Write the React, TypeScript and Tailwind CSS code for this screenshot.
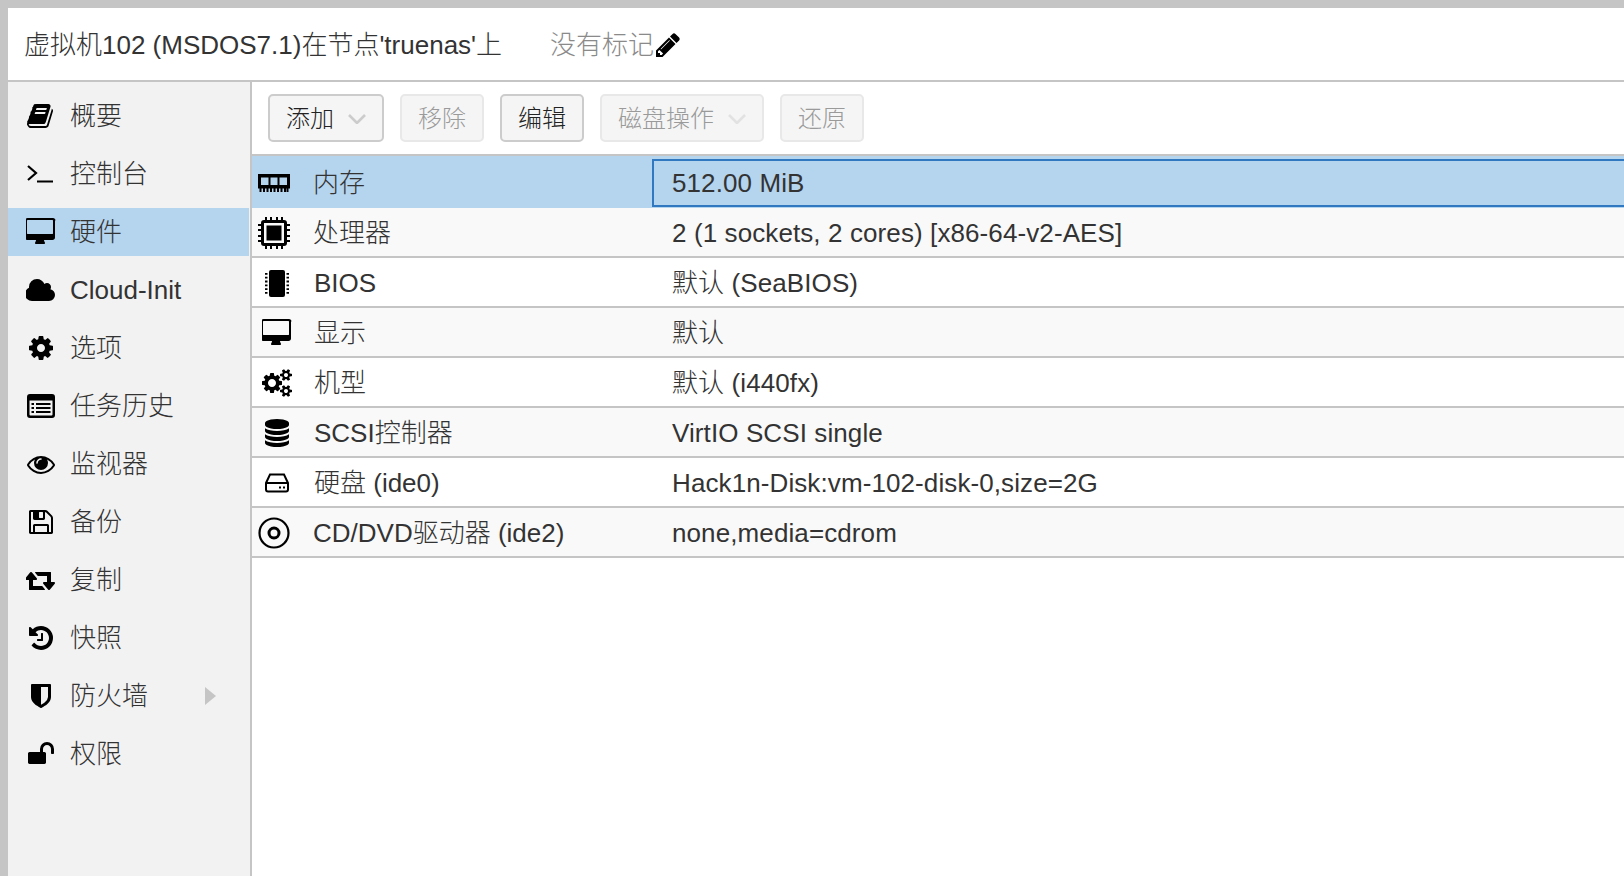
import React from 'react';

const FONT = "font-['Liberation_Sans','Noto_Sans_CJK_SC',sans-serif]";

// Font Awesome 4 shapes, the set the screenshot uses
const paths = {
  book: 'M1639 478q40 57 18 129l-275 906q-19 64-76.500 107.500t-122.500 43.500h-923q-77 0-148.500-53.500t-99.500-131.500q-24-67-2-127 0-4 3-27t4-37q1-8-3-21.500t-3-19.500q2-11 8-21t16.500-23.500 16.500-23.500q23-38 45-91.500t30-91.500q3-10 .5-30t-.5-28q3-11 17-28t17-23q21-36 42-92t25-90q1-9-2.500-32t.5-28q4-13 22-30.500t22-22.500q19-26 42.500-84.500t27.500-96.500q1-8-3-25.500t-2-26.500q2-8 9-18t18-23 17-21q8-12 16.500-30.500t15-35 16-36 19.500-32 26.500-23.500 36-11.500 47.500 5.500l-1 3q38-9 51-9h761q74 0 114 56t18 130l-274 906q-36 119-71.500 153.500t-128.500 34.500h-869q-27 0-38 15-11 16-1 43 24 70 144 70h923q29 0 56-15.500t35-41.500l300-987q7-22 5-57 38 15 59 43zm-1064 2q-4 13 2 22.500t20 9.500h608q13 0 25.500-9.500t16.500-22.500l21-64q4-13-2-22.500t-20-9.500h-608q-13 0-25.500 9.500t-16.500 22.500zm-83 256q-4 13 2 22.500t20 9.500h608q13 0 25.500-9.500t16.500-22.500l21-64q4-13-2-22.500t-20-9.500h-608q-13 0-25.500 9.500t-16.500 22.500z',
  desktop: 'M1728 992v-832q0-13-9.500-22.500t-22.500-9.500h-1600q-13 0-22.500 9.500t-9.500 22.500v832q0 13 9.500 22.500t22.500 9.500h1600q13 0 22.500-9.500t9.500-22.500zm128-832v1088q0 66-47 113t-113 47h-544q0 37 16 77.500t32 71 16 43.500q0 26-19 45t-45 19h-512q-26 0-45-19t-19-45q0-14 16-44t32-70 16-78h-544q-66 0-113-47t-47-113v-1088q0-66 47-113t113-47h1632q66 0 113 47t47 113z',
  cloud: 'M1856 1216q0 159-112.500 271.500t-271.500 112.500h-1088q-185 0-316.500-131.500t-131.500-316.500q0-132 71-241.500t187-163.500q-2-28-2-43 0-212 150-362t362-150q158 0 286.500 88t187.500 230q70-62 166-62 106 0 181 75t75 181q0 75-41 138 129 30 213 134.500t84 239.500z',
  cog: 'M1152 896q0-106-75-181t-181-75-181 75-75 181 75 181 181 75 181-75 75-181zm512-109v222q0 12-8 23t-20 13l-185 28q-19 54-39 91 35 50 107 138 10 12 10 25t-9 23q-27 37-99 108t-94 71q-12 0-26-9l-138-108q-44 23-91 38-16 136-29 186-7 28-36 28h-222q-14 0-24.500-8.500t-11.500-21.500l-28-184q-49-16-90-37l-141 107q-10 9-25 9-14 0-25-11-126-114-165-168-7-10-7-23 0-12 8-23 15-21 51-66.500t54-70.500q-27-50-41-99l-183-27q-13-2-21-12.500t-8-23.500v-222q0-12 8-23t19-13l186-28q14-46 39-92-40-57-107-138-10-12-10-24 0-10 9-23 26-36 98.500-107.500t94.500-71.500q13 0 26 10l138 107q44-23 91-38 16-136 29-186 7-28 36-28h222q14 0 24.500 8.500t11.500 21.500l28 184q49 16 90 37l142-107q9-9 24-9 13 0 25 10 129 119 165 170 7 8 7 22 0 12-8 23-15 21-51 66.500t-54 70.500q26 50 41 98l183 28q13 2 21 12.500t8 23.500z',
  cogs: 'M896 896q0-106-75-181t-181-75-181 75-75 181 75 181 181 75 181-75 75-181zm768 512q0-52-38-90t-90-38-90 38-38 90q0 53 37.500 90.500t90.500 37.500 90.500-37.500 37.500-90.500zm0-1024q0-52-38-90t-90-38-90 38-38 90q0 53 37.500 90.500t90.500 37.500 90.500-37.500 37.500-90.500zm-384 421v185q0 10-7 19.500t-16 10.500l-155 24q-11 35-32 76 34 48 90 115 7 11 7 20 0 12-7 19-23 30-82.500 89.500t-78.500 59.500q-11 0-21-7l-115-90q-37 19-77 31-11 108-23 155-7 24-30 24h-186q-11 0-20-7.500t-10-17.500l-23-153q-34-10-75-31l-118 89q-7 7-20 7-11 0-21-8-144-133-144-160 0-9 7-19 10-14 41-53t47-61q-23-44-35-82l-152-24q-10-1-17-9.500t-7-19.500v-185q0-10 7-19.500t16-10.500l155-24q11-35 32-76-34-48-90-115-7-11-7-20 0-12 7-20 22-30 82-89t79-59q11 0 21 7l115 90q34-18 77-32 11-108 23-154 7-24 30-24h186q11 0 20 7.500t10 17.500l23 153q34 10 75 31l118-89q8-7 20-7 11 0 21 8 144 133 144 160 0 8-7 19-12 16-42 54t-45 60q23 48 34 82l152 23q10 2 17 10.500t7 19.500zm640 533v140q0 16-149 31-12 27-30 52 51 113 51 138 0 4-4 7-122 71-124 71-8 0-46-47t-52-68q-20 2-30 2t-30-2q-14 21-52 68t-46 47q-2 0-124-71-4-3-4-7 0-25 51-138-18-25-30-52-149-15-149-31v-140q0-16 149-31 13-29 30-52-51-113-51-138 0-4 4-7 4-2 35-20t59-34 30-16q8 0 46 46.500t52 67.500q20-2 30-2t30 2q51-71 92-112l6-2q4 0 124 70 4 3 4 7 0 25-51 138 17 23 30 52 149 15 149 31zm0-1024v140q0 16-149 31-12 27-30 52 51 113 51 138 0 4-4 7-122 71-124 71-8 0-46-47t-52-68q-20 2-30 2t-30-2q-14 21-52 68t-46 47q-2 0-124-71-4-3-4-7 0-25 51-138-18-25-30-52-149-15-149-31v-140q0-16 149-31 13-29 30-52-51-113-51-138 0-4 4-7 4-2 35-20t59-34 30-16q8 0 46 46.500t52 67.500q20-2 30-2t30 2q51-71 92-112l6-2q4 0 124 70 4 3 4 7 0 25-51 138 17 23 30 52 149 15 149 31z',
  eye: 'M1664 960q-152-236-381-353 61 104 61 225 0 185-131.500 316.500t-316.500 131.500-316.500-131.500-131.500-316.500q0-121 61-225-229 117-381 353 133 205 333.500 326.500t434.500 121.500 434.500-121.500 333.500-326.500zm-720-384q0-20-14-34t-34-14q-125 0-214.500 89.500t-89.500 214.500q0 20 14 34t34 14 34-14 14-34q0-86 61-147t147-61q20 0 34-14t14-34zm848 384q0 34-20 69-140 230-376.500 368.500t-499.500 138.500-499.500-139-376.500-368q-20-35-20-69t20-69q140-229 376.500-368t499.500-139 499.500 139 376.500 368q20 35 20 69z',
  floppy: 'M512 1536h768v-384h-768v384zm896 0h128v-896q0-14-10-38.500t-20-34.500l-281-281q-10-10-34-20t-39-10v416q0 40-28 68t-68 28h-576q-40 0-68-28t-28-68v-416h-128v1280h128v-416q0-40 28-68t68-28h832q40 0 68 28t28 68v416zm-384-928v-320q0-13-9.500-22.500t-22.500-9.500h-192q-13 0-22.500 9.500t-9.500 22.500v320q0 13 9.500 22.500t22.500 9.500h192q13 0 22.500-9.500t9.500-22.500zm640 32v928q0 40-28 68t-68 28h-1344q-40 0-68-28t-28-68v-1344q0-40 28-68t68-28h928q40 0 88 20t76 48l280 280q28 28 48 76t20 88z',
  retweet: 'M1216 1504q0 13-9.500 22.500t-22.500 9.500h-960q-8 0-13.500-2t-9-7-5.500-8-3-11.500-1-11.500v-600h-192q-26 0-45-19t-19-45q0-24 15-41l320-384q19-22 49-22t49 22l320 384q15 17 15 41 0 26-19 45t-45 19h-192v384h576q16 0 25 11l160 192q7 10 7 21zm640-416q0 24-15 41l-320 384q-20 23-49 23t-49-23l-320-384q-15-17-15-41 0-26 19-45t45-19h192v-384h-576q-16 0-25-12l-160-192q-7-9-7-20 0-13 9.500-22.500t22.500-9.500h960q8 0 13.500 2t9 7 5.500 8 3 11.500 1 11.500v600h192q26 0 45 19t19 45z',
  history: 'M1664 896q0 156-61 298t-164 245-245 164-298 61q-172 0-327-72.500t-264-204.500q-7-10-6.500-22.500t8.500-20.500l137-138q10-9 25-9 16 2 23 12 73 95 179 147t225 52q104 0 198.500-40.500t163.500-109.500 109.500-163.500 40.500-198.500-40.500-198.500-109.500-163.500-163.500-109.500-198.500-40.500q-98 0-188 35.500t-160 101.500l137 138q31 30 14 69-17 40-59 40h-448q-26 0-45-19t-19-45v-448q0-42 40-59 39-17 69 14l130 129q107-101 244.500-156.500t284.500-55.500q156 0 298 61t245 164 164 245 61 298zm-640-288v448q0 14-9 23t-23 9h-320q-14 0-23-9t-9-23v-64q0-14 9-23t23-9h224v-352q0-14 9-23t23-9h64q14 0 23 9t9 23z',
  shield: 'M1344 960v-640h-448v1137q119-63 213-137 235-184 235-360zm192-768v768q0 86-33.500 170.500t-83 150-118 127.500-126.500 103-121 77.500-89.500 49.500-42.500 20q-12 6-26 6t-26-6q-16-7-42.500-20t-89.500-49.500-121-77.500-126.500-103-118-127.500-83-150-33.500-170.500v-768q0-26 19-45t45-19h1152q26 0 45 19t19 45z',
  unlock: 'M1728 576v256q0 26-19 45t-45 19h-64q-26 0-45-19t-19-45v-256q0-106-75-181t-181-75-181 75-75 181v192h96q40 0 68 28t28 68v576q0 40-28 68t-68 28h-960q-40 0-68-28t-28-68v-576q0-40 28-68t68-28h672v-192q0-185 131.500-316.500t316.500-131.500 316.500 131.500 131.500 316.500z',
  database: 'M896 768q237 0 443-43t325-127v170q0 69-103 128t-280 93.500-385 34.500-385-34.500-280-93.500-103-128v-170q119 84 325 127t443 43zm0 768q237 0 443-43t325-127v170q0 69-103 128t-280 93.500-385 34.500-385-34.500-280-93.500-103-128v-170q119 84 325 127t443 43zm0-384q237 0 443-43t325-127v170q0 69-103 128t-280 93.500-385 34.500-385-34.500-280-93.500-103-128v-170q119 84 325 127t443 43zm0-1152q208 0 385 34.500t280 93.500 103 128v128q0 69-103 128t-280 93.500-385 34.500-385-34.500-280-93.500-103-128v-128q0-69 103-128t280-93.500 385-34.500z',
  pencil: 'M491 1536l91-91-235-235-91 91v107h128v128h107zm523-928q0-22-22-22-10 0-17 7l-542 542q-7 7-7 17 0 22 22 22 10 0 17-7l542-542q7-7 7-17zm-54-192l416 416-832 832h-416v-416zm683 96q0 53-37 90l-166 166-416-416 166-165q36-38 90-38 53 0 91 38l235 234q37 39 37 91z',
};

const Fa = ({ d, wide }: { d: string; wide?: boolean }) => (
  <svg width={wide ? 30 : 28} height="28" viewBox={wide ? '0 0 1920 1792' : '0 0 1792 1792'} fill="currentColor">
    <path d={d} />
  </svg>
);

const TerminalIcon = () => (
  <svg width="28" height="20" viewBox="0 0 28 20" fill="none" stroke="currentColor">
    <path d="M1 2l8 7-8 7" strokeWidth="2.200" />
    <path d="M10 17.500h16" strokeWidth="2" />
  </svg>
);

const ListIcon = () => (
  <svg width="28" height="24" viewBox="0 0 28 24" fill="currentColor">
    <path d="M3 0h22a3 3 0 013 3v18a3 3 0 01-3 3H3a3 3 0 01-3-3V3a3 3 0 013-3zM2.500 6.500v14a1 1 0 001 1h21a1 1 0 001-1v-14z" fillRule="evenodd" />
    <path d="M4.500 9h2.500v2H4.500zM4.500 13h2.500v2H4.500zM4.500 17h2.500v2H4.500zM9 9h14.500v2H9zM9 13h14.500v2H9zM9 17h14.500v2H9z" />
  </svg>
);

const MemoryIcon = () => (
  <svg width="32" height="18" viewBox="0 0 32 18" fill="currentColor">
    <path d="M0 0h32v14.500H0zM3 3.500v7.500h7.500V3.500zM12.500 3.500v7.500h7V3.500zM21.500 3.500v7.500h7.500V3.500z" fillRule="evenodd" />
    <path d="M1.500 14h2v4h-2zM5 14h2v4H5zM8.500 14h2v4h-2zM12 14h2v4h-2zM15.500 14h2v4h-2zM19 14h2v4h-2zM22.500 14h2v4h-2zM26 14h2v4h-2zM28.500 14h2v4h-2z" />
  </svg>
);

const CpuIcon = () => (
  <svg width="32" height="32" viewBox="0 0 32 32" fill="currentColor">
    <path d="M6 3h20a3 3 0 013 3v20a3 3 0 01-3 3H6a3 3 0 01-3-3V6a3 3 0 013-3zM6 6v20h20V6z" fillRule="evenodd" />
    <rect x="8.500" y="8.500" width="15" height="15" />
    <path d="M7 0h2v4H7zM12 0h2v4h-2zM18 0h2v4h-2zM23 0h2v4h-2zM7 28h2v4H7zM12 28h2v4h-2zM18 28h2v4h-2zM23 28h2v4h-2zM0 7h4v2H0zM0 12h4v2H0zM0 18h4v2H0zM0 23h4v2H0zM28 7h4v2h-4zM28 12h4v2h-4zM28 18h4v2h-4zM28 23h4v2h-4z" />
  </svg>
);

const BiosIcon = () => (
  <svg width="24" height="27" viewBox="0 0 24 27" fill="currentColor">
    <rect x="4" y="0" width="16" height="27" rx="2" />
    <path d="M0 3h2.500v1.800H0zM0 6.800h2.500v1.800H0zM0 10.600h2.500v1.800H0zM0 14.400h2.500v1.800H0zM0 18.200h2.500v1.800H0zM0 22h2.500v1.800H0zM21.500 3H24v1.800h-2.500zM21.500 6.800H24v1.800h-2.500zM21.500 10.600H24v1.800h-2.500zM21.500 14.400H24v1.800h-2.500zM21.500 18.200H24v1.800h-2.500zM21.500 22H24v1.800h-2.500z" />
  </svg>
);

const HddIcon = () => (
  <svg width="24" height="20" viewBox="0 0 24 20" fill="none" stroke="currentColor" strokeWidth="2">
    <path d="M1 10L5 1.500h14L23 10v6.500a2 2 0 01-2 2H3a2 2 0 01-2-2zM1 10h22" />
    <path d="M14 14.500h2M18 14.500h2" />
  </svg>
);

const CdIcon = () => (
  <svg width="32" height="32" viewBox="0 0 32 32" fill="none" stroke="currentColor">
    <circle cx="16" cy="16" r="14.500" strokeWidth="2.200" />
    <circle cx="16" cy="16" r="5" strokeWidth="3" />
  </svg>
);

const navItems = [
  { label: '概要', icon: <Fa d={paths.book} /> },
  { label: '控制台', icon: <TerminalIcon /> },
  { label: '硬件', icon: <Fa d={paths.desktop} wide />, active: true },
  { label: 'Cloud-Init', icon: <Fa d={paths.cloud} wide /> },
  { label: '选项', icon: <Fa d={paths.cog} /> },
  { label: '任务历史', icon: <ListIcon /> },
  { label: '监视器', icon: <Fa d={paths.eye} /> },
  { label: '备份', icon: <Fa d={paths.floppy} /> },
  { label: '复制', icon: <Fa d={paths.retweet} wide /> },
  { label: '快照', icon: <Fa d={paths.history} /> },
  { label: '防火墙', icon: <Fa d={paths.shield} />, arrow: true },
  { label: '权限', icon: <Fa d={paths.unlock} /> },
];

const rows = [
  { name: '内存', value: '512.00 MiB', icon: <MemoryIcon />, selected: true },
  { name: '处理器', value: '2 (1 sockets, 2 cores) [x86-64-v2-AES]', icon: <CpuIcon /> },
  { name: 'BIOS', value: '默认 (SeaBIOS)', icon: <BiosIcon />, shifted: true },
  { name: '显示', value: '默认', icon: <Fa d={paths.desktop} wide />, shifted: true },
  { name: '机型', value: '默认 (i440fx)', icon: <Fa d={paths.cogs} wide />, shifted: true },
  { name: 'SCSI控制器', value: 'VirtIO SCSI single', icon: <Fa d={paths.database} />, shifted: true },
  { name: '硬盘 (ide0)', value: 'Hack1n-Disk:vm-102-disk-0,size=2G', icon: <HddIcon />, shifted: true },
  { name: 'CD/DVD驱动器 (ide2)', value: 'none,media=cdrom', icon: <CdIcon /> },
];

const ToolButton = ({ label, width, disabled, menu }: { label: string; width: string; disabled?: boolean; menu?: boolean }) => (
  <button
    className={`${width} flex h-[48px] items-center justify-center rounded-[5px] border-2 bg-[#f5f5f5] pt-[2px] text-[24px] ${
      disabled ? 'border-[#e8e8e8] text-[#9a9a9a]' : 'border-[#cccccc] text-[#222]'
    }`}
  >
    {label}
    {menu && (
      <svg width="18" height="10" viewBox="0 0 18 10" fill="none" stroke={disabled ? '#e2e2e2' : '#cccccc'} strokeWidth="2.600" className="ml-[14px]">
        <path d="M1 1l8 8 8-8" />
      </svg>
    )}
  </button>
);

const App = () => {
  return (
    <div className={`h-[876px] w-[1624px] overflow-hidden bg-[#c5c5c5] pt-2 pl-2 text-[26px] font-light text-[#333] ${FONT}`}>
      <div className="flex h-[868px] flex-col bg-white">
        <div className="flex h-[74px] shrink-0 items-center border-b-2 border-[#c5c5c5] pl-4 pt-[2px]">
          <span className="w-[526px]">虚拟机102 (MSDOS7.1)在节点'truenas'上</span>
          <span className="text-[#8a8a8a]">没有标记</span>
          <span className="text-black">
            <Fa d={paths.pencil} />
          </span>
        </div>

        <div className="flex min-h-0 flex-1">
          <div className="flex w-[244px] shrink-0 flex-col gap-[10px] border-r-2 border-[#c5c5c5] bg-[#f2f2f2] pt-[10px]">
            {navItems.map((item) => (
              <div key={item.label} className={`flex h-[48px] items-center ${item.active ? 'mr-[1px] bg-[#b5d4ee]' : ''}`}>
                <span className="flex w-[62px] justify-center pl-[3px] text-black">{item.icon}</span>
                <span>{item.label}</span>
                {item.arrow && <span className="ml-[57px] h-0 w-0 border-y-[9px] border-l-[11px] border-y-transparent border-l-[#c5c5c5]" />}
              </div>
            ))}
          </div>

          <div className="min-w-0 flex-1">
            <div className="flex h-[72px] items-center gap-4 pl-4">
              <ToolButton label="添加" width="w-[116px]" menu />
              <ToolButton label="移除" width="w-[84px]" disabled />
              <ToolButton label="编辑" width="w-[84px]" />
              <ToolButton label="磁盘操作" width="w-[164px]" disabled menu />
              <ToolButton label="还原" width="w-[84px]" disabled />
            </div>

            <div className="border-t-2 border-[#c5c5c5]">
              {rows.map((row, index) => (
                <div
                  key={row.name}
                  className={`flex items-center pt-[2px] ${
                    row.selected
                      ? 'h-[52px] bg-[#b5d4ee]'
                      : `h-[50px] border-b-2 border-[#c5c5c5] ${index % 2 === 1 ? 'bg-[#f9f9f9]' : 'bg-white'}`
                  }`}
                >
                  <span className={`flex w-[44px] shrink-0 justify-center text-black ${row.shifted ? 'pl-[6px]' : ''}`}>{row.icon}</span>
                  <span className={`w-[356px] shrink-0 ${row.shifted ? 'pl-[18px]' : 'pl-[17px]'}`}>{row.name}</span>
                  {row.selected ? (
                    <span className="flex h-[48px] flex-1 items-center border-y-2 border-l-2 border-[#3079c0] pl-[18px] tracking-[0.1px]">{row.value}</span>
                  ) : (
                    <span className="pl-[20px] tracking-[0.1px]">{row.value}</span>
                  )}
                </div>
              ))}
            </div>
          </div>
        </div>
      </div>
    </div>
  );
};

export default App;
